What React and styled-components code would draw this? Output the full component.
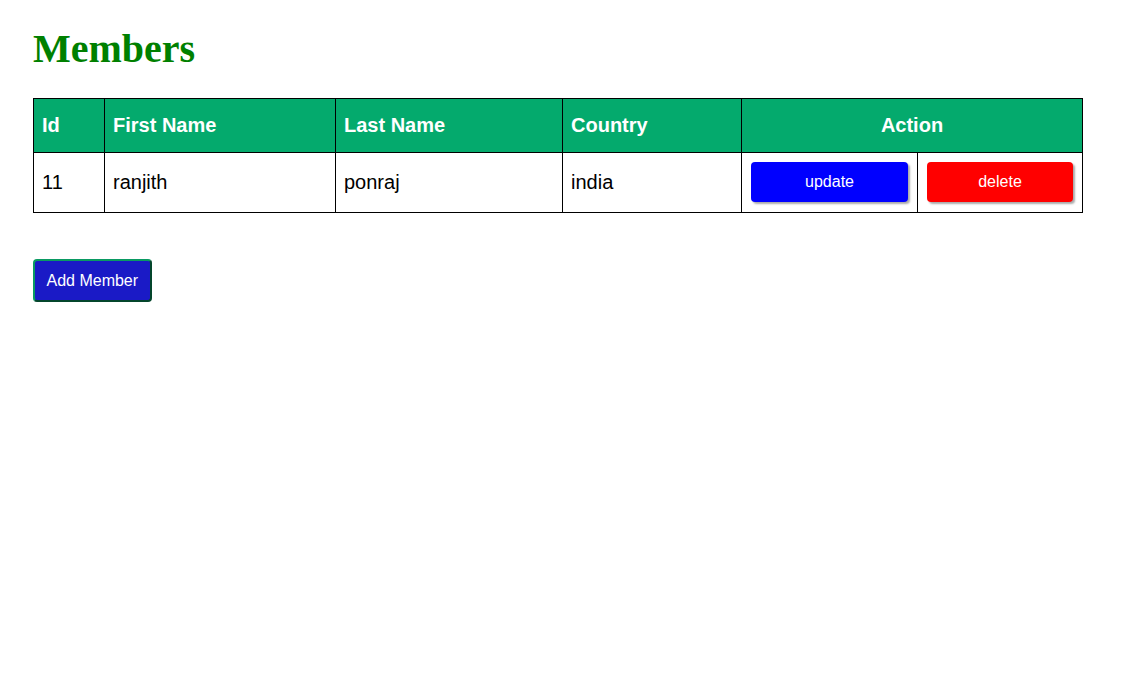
import React from 'react'
import styled, { createGlobalStyle } from 'styled-components'

const GlobalStyle = createGlobalStyle`
  body {
    margin: 0;
    background: #fff;
    font-family: "Liberation Sans", Arial, sans-serif;
  }
`

const Page = styled.div`
  padding: 27px 33px;
`

const Title = styled.h1`
  margin: 0 0 27px;
  font-family: "Liberation Serif", "Times New Roman", serif;
  font-size: 40px;
  font-weight: bold;
  line-height: 44px;
  color: #008000;
`

const Table = styled.table`
  width: 1050px;
  border-collapse: collapse;
  table-layout: fixed;
  font-size: 20px;
`

const Th = styled.th`
  background: #04aa6d;
  color: #fff;
  border: 1px solid #000;
  padding: 15px 8px;
  line-height: 23px;
  text-align: ${({ center }) => (center ? 'center' : 'left')};
`

const Td = styled.td`
  border: 1px solid #000;
  padding: 9px 8px 10px;
  line-height: 23px;
  color: #000;
`

const ActionButton = styled.button`
  display: block;
  width: calc(100% - 2px);
  height: 40px;
  margin: 0 1px;
  border: none;
  border-radius: 4px;
  background: ${({ color }) => color};
  color: #fff;
  font-family: "Liberation Sans", Arial, sans-serif;
  font-size: 16px;
  box-shadow: 2px 2px 2px #aaa;
  cursor: pointer;
`

const AddButton = styled.button`
  margin-top: 46px;
  padding: 10px 11.5px;
  height: 43px;
  border: 2px outset #0a9a62;
  border-radius: 4px;
  background: #1a1ac6;
  color: #fff;
  font-family: "Liberation Sans", Arial, sans-serif;
  font-size: 16px;
  cursor: pointer;
`

const members = [
  { id: 11, firstName: 'ranjith', lastName: 'ponraj', country: 'india' }
]

export default function App () {
  return (
    <Page>
      <GlobalStyle />
      <Title>Members</Title>
      <Table>
        <colgroup>
          <col style={{ width: 71 }} />
          <col style={{ width: 231 }} />
          <col style={{ width: 227 }} />
          <col style={{ width: 179 }} />
          <col style={{ width: 176 }} />
          <col style={{ width: 165 }} />
        </colgroup>
        <thead>
          <tr>
            <Th>Id</Th>
            <Th>First Name</Th>
            <Th>Last Name</Th>
            <Th>Country</Th>
            <Th colSpan={2} center>Action</Th>
          </tr>
        </thead>
        <tbody>
          {members.map(m => (
            <tr key={m.id}>
              <Td>{m.id}</Td>
              <Td>{m.firstName}</Td>
              <Td>{m.lastName}</Td>
              <Td>{m.country}</Td>
              <Td><ActionButton color='#0000ff'>update</ActionButton></Td>
              <Td><ActionButton color='#ff0000'>delete</ActionButton></Td>
            </tr>
          ))}
        </tbody>
      </Table>
      <AddButton>Add Member</AddButton>
    </Page>
  )
}
